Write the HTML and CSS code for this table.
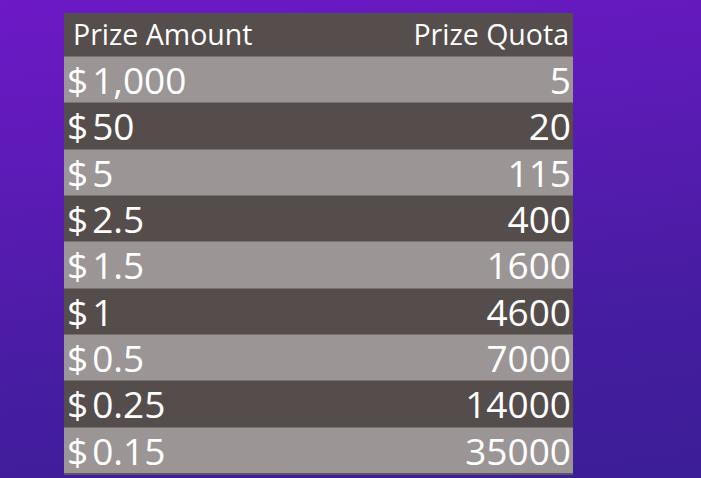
FILE: index.html
```html
<!DOCTYPE html>
<html>
<head>
<meta charset="utf-8">
<link rel="stylesheet" href="styles.css">
</head>
<body>
<div class="page">
  <div class="table">
    <div class="row head"><span class="cell">Prize Amount</span><span class="cell num">Prize Quota</span></div>
    <div class="row light"><span class="cell amt"><span class="cur">$</span>1,000</span><span class="cell num">5</span></div>
    <div class="row dark"><span class="cell amt"><span class="cur">$</span>50</span><span class="cell num">20</span></div>
    <div class="row light"><span class="cell amt"><span class="cur">$</span>5</span><span class="cell num">115</span></div>
    <div class="row dark"><span class="cell amt"><span class="cur">$</span>2.5</span><span class="cell num">400</span></div>
    <div class="row light"><span class="cell amt"><span class="cur">$</span>1.5</span><span class="cell num">1600</span></div>
    <div class="row dark"><span class="cell amt"><span class="cur">$</span>1</span><span class="cell num">4600</span></div>
    <div class="row light"><span class="cell amt"><span class="cur">$</span>0.5</span><span class="cell num">7000</span></div>
    <div class="row dark"><span class="cell amt"><span class="cur">$</span>0.25</span><span class="cell num">14000</span></div>
    <div class="row light"><span class="cell amt"><span class="cur">$</span>0.15</span><span class="cell num">35000</span></div>
  </div>
</div>
</body>
</html>
```

FILE: styles.css
```css
html, body {
  margin: 0;
  padding: 0;
}
body {
  width: 701px;
  height: 478px;
  overflow: hidden;
  background: linear-gradient(172deg, #6d19c6 0%, #5a1bb4 35%, #451d9f 70%, #3c1e98 100%);
  font-family: "Open Sans", "Noto Sans", sans-serif;
  color: #ffffff;
}
.page {
  padding: 13px 0 0 64px;
}
.table {
  width: 509px;
  display: flex;
  flex-direction: column;
  border-bottom: 2px solid #5b5567;
}
.row {
  display: flex;
  justify-content: space-between;
  align-items: center;
  box-sizing: border-box;
  height: 46.33px;
  border-top: 1px solid #78716f;
}
.row.head {
  height: 43px;
  border-top: none;
  background: #554e4c;
  font-size: 28.5px;
  padding: 0 4px 0 9px;
}
.row.light {
  background: #9b9695;
}
.row.dark {
  background: #554d4b;
}
.row.light, .row.dark {
  font-size: 37px;
  padding: 0 2px 0 3px;
}
.cell {
  white-space: nowrap;
  line-height: 1;
}
.cur {
  margin-right: 4px;
}
```
